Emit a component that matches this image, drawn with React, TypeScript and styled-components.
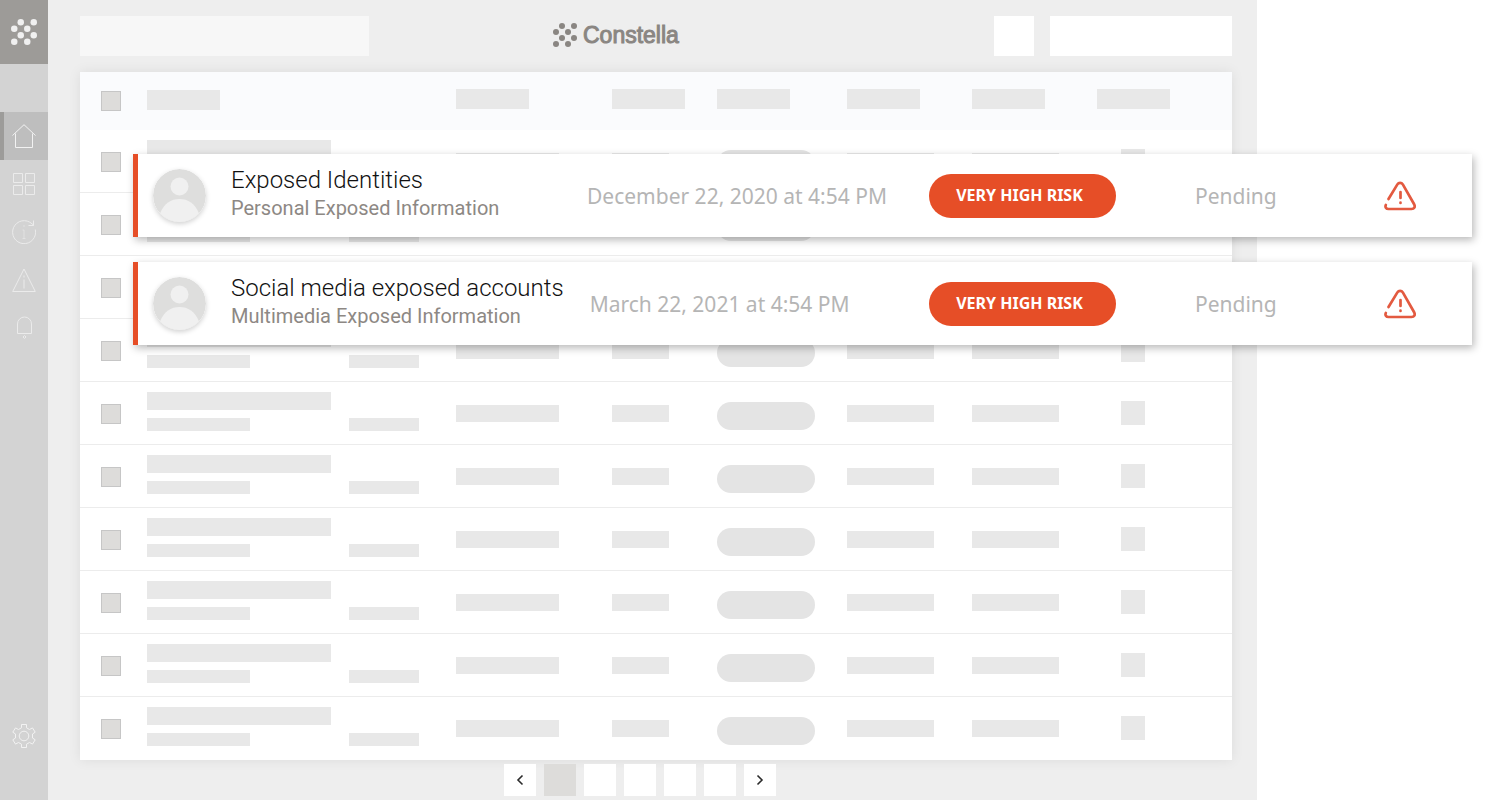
import React from "react";
import styled, { createGlobalStyle } from "styled-components";

const color = {
  shell: "#eeeeee",
  rail: "#d3d3d3",
  railTop: "#9d9b98",
  railActive: "#bebebe",
  bar: "#e8e8e8",
  pill: "#e4e4e4",
  box: "#dddcda",
  accent: "#e64e27",
  brand: "#8a8682",
};

const GlobalStyle = createGlobalStyle`
  *, *::before, *::after { box-sizing: border-box; }
  body { margin: 0; background: #fff; font-family: Roboto, "Liberation Sans", sans-serif; }
  button, input { font: inherit; border: 0; padding: 0; margin: 0; border-radius: 0; }
`;

const Page = styled.div`
  position: relative;
  padding-right: 240px;
`;

const Shell = styled.div`
  display: flex;
  min-height: 100vh;
  background: ${color.shell};
`;

const Rail = styled.aside`
  display: flex;
  flex-direction: column;
  flex: none;
  width: 48px;
  padding-bottom: 40px;
  background: ${color.rail};
`;

const RailBrand = styled.a`
  display: grid;
  place-items: center;
  height: 64px;
  background: ${color.railTop};
  color: #f0f0f0;
`;

const RailNav = styled.nav`
  display: flex;
  flex-direction: column;
  flex: 1;
  padding-top: 48px;
`;

const RailLink = styled.a<{ $active?: boolean; $last?: boolean }>`
  display: grid;
  place-items: center;
  height: 48px;
  margin-top: ${(p) => (p.$last ? "auto" : "0")};
  color: ${(p) => (p.$active || p.$last ? "#f2f2f2" : "#ebebeb")};
  background: ${(p) => (p.$active ? color.railActive : "transparent")};
  box-shadow: ${(p) => (p.$active ? "inset 4px 0 0 #9d9c9a" : "none")};
`;

const LineIcon = styled.svg`
  display: block;
  width: 24px;
  height: 24px;
  fill: none;
  stroke: currentColor;
  stroke-width: 1;
`;

const Main = styled.main`
  flex: 1;
  min-width: 0;
  padding: 16px 25px 4px 32px;
`;

const TopBar = styled.header`
  display: flex;
  align-items: center;
  height: 40px;
  margin-bottom: 16px;
`;

const Search = styled.input`
  width: 289px;
  height: 40px;
  background: #f7f7f7;
`;

const Brand = styled.a`
  display: flex;
  align-items: center;
  gap: 6px;
  margin-left: 184px;
  padding-bottom: 2px;
  color: ${color.brand};
  font: 400 23px/38px "Liberation Sans", Arial, sans-serif;
  -webkit-text-stroke: 1px ${color.brand};
  text-decoration: none;
`;

const TopActions = styled.div`
  display: flex;
  gap: 16px;
  margin-left: auto;
`;

const TopButton = styled.button<{ $width: number }>`
  width: ${(p) => p.$width}px;
  height: 40px;
  background: #fff;
`;

const Table = styled.table`
  width: 100%;
  table-layout: fixed;
  border-collapse: separate;
  border-spacing: 0;
  background: #fff;
  box-shadow: 0 0 12px rgba(0, 0, 0, 0.08);
`;

const HeadCell = styled.th<{ $lift?: number }>`
  height: 58px;
  padding: 0 0 ${(p) => p.$lift ?? 0}px;
  background: #fafbfd;
  text-align: left;
`;

const Cell = styled.td<{ $inset?: number; $last?: boolean }>`
  height: 63px;
  padding: 10px 0 0 ${(p) => p.$inset ?? 0}px;
  border-bottom: ${(p) => (p.$last ? "0" : "1px solid #ececec")};
  vertical-align: top;
`;

const Tick = styled.input`
  appearance: none;
  display: block;
  width: 20px;
  height: 20px;
  border: 1px solid #c6c6c6;
  background: ${color.box};
`;

const TickSlot = styled.div<{ $top: number }>`
  padding: ${(p) => p.$top}px 0 0 21px;
`;

const Bar = styled.div<{ $w: number; $h: number; $top?: number; $round?: boolean }>`
  width: ${(p) => p.$w}px;
  height: ${(p) => p.$h}px;
  margin-top: ${(p) => p.$top ?? 0}px;
  border-radius: ${(p) => (p.$round ? "14px" : "0")};
  background: ${(p) => (p.$round ? color.pill : color.bar)};
`;

const Pager = styled.nav`
  display: flex;
  justify-content: center;
  gap: 8px;
  padding: 4px 32px 0 0;
`;

const PageButton = styled.button<{ $current?: boolean }>`
  display: grid;
  place-items: center;
  width: 32px;
  height: 32px;
  background: ${(p) => (p.$current ? color.box : "#fff")};
  color: #2b2b2b;
`;

const Alerts = styled.section`
  position: absolute;
  top: 154px;
  left: 133px;
  right: 25px;
  display: flex;
  flex-direction: column;
  gap: 25px;
`;

const Alert = styled.article`
  display: flex;
  align-items: center;
  height: 83px;
  padding: 0 56px 0 15px;
  border-left: 5px solid ${color.accent};
  background: #fff;
  box-shadow: 2px 3px 8px rgba(0, 0, 0, 0.28);
`;

const Avatar = styled.svg`
  flex: none;
  width: 53px;
  height: 53px;
  margin-right: 25px;
  border-radius: 50%;
  box-shadow: 0 2px 5px rgba(0, 0, 0, 0.18);
`;

const Summary = styled.div`
  min-width: 356px;
  padding: 0 26px 3px 0;
  white-space: nowrap;
`;

const Title = styled.h2`
  margin: 0;
  color: #111;
  font-size: 24px;
  font-weight: 300;
  line-height: 28px;
`;

const Detail = styled.p`
  margin: 0;
  color: #8d8884;
  font-size: 20px;
  line-height: 28px;
`;

const Muted = styled.div<{ $width?: number }>`
  flex: ${(p) => (p.$width ? `0 0 ${p.$width}px` : "1")};
  color: #b5b5b5;
  font: 400 21px/28px "Noto Sans", sans-serif;
  white-space: nowrap;
`;

const Risk = styled.button`
  flex: none;
  width: 187px;
  height: 44px;
  margin-right: 79px;
  padding: 0 6px 2px 0;
  border-radius: 22px;
  background: ${color.accent};
  color: #fff;
  font: 700 16px/42px "Noto Sans", sans-serif;
`;

const WarnIcon = styled.svg`
  display: block;
  flex: none;
  width: 32px;
  height: 30px;
  fill: none;
  stroke: #e35a40;
  stroke-width: 2.7;
  stroke-linecap: round;
  stroke-linejoin: round;
`;

const DOTS = [
  [9, 3], [21, 3], [3, 9], [15, 9], [9, 15], [21, 15], [3, 21], [15, 21],
];

function Mark({ size }: { size: number }) {
  return (
    <svg width={size} height={size} viewBox="0 0 24 24" fill="currentColor" aria-hidden="true">
      {DOTS.map(([x, y]) => (
        <circle key={`${x}-${y}`} cx={x} cy={y} r="3" />
      ))}
    </svg>
  );
}

const NAV = [
  {
    label: "Home",
    shape: <path d="M0.5 11.5 12 .7l11.500 10.800M3.500 9.500v14h17v-14" />,
  },
  {
    label: "Dashboard",
    shape: <path d="M1.500 1.500h9v9h-9zM13.500 1.500h9v9h-9zM1.500 13.500h9v9h-9zM13.500 13.500h9v9h-9z" />,
  },
  {
    label: "Activity",
    shape: (
      <>
        <path d="M23.300 9.500A11.500 11.500 0 1 1 20 3.800l2 1.700M21.500 .5v5h-5" />
        <path d="M12 5v2M10.500 10H12v8.500M10.500 18.500h3" opacity="0.6" />
      </>
    ),
  },
  {
    label: "Threats",
    shape: <path d="M12 1 23.300 23.500H.7zM12 7.500v2M12 11.500v9" />,
  },
  {
    label: "Notifications",
    shape: <path d="M5.500 17.500V8a7 7 0 0 1 14 0v9.500zM12.500 19.500l1.500 1.500-1.500 1.500L11 21z" />,
  },
];

const COLUMNS = [67, 202, 107, 156, 105, 130, 125, 125];
const ROWS = Array.from({ length: 10 }, (_, i) => i);

const ALERTS = [
  {
    title: "Exposed Identities",
    detail: "Personal Exposed Information",
    date: "December 22, 2020 at 4:54 PM",
  },
  {
    title: "Social media exposed accounts",
    detail: "Multimedia Exposed Information",
    date: "March 22, 2021 at 4:54 PM",
  },
];

function Chevron({ d }: { d: string }) {
  return (
    <svg width="8" height="12" viewBox="0 0 8 12" fill="none" stroke="currentColor" strokeWidth="1.6" aria-hidden="true">
      <path d={d} />
    </svg>
  );
}

function Row({ index }: { index: number }) {
  const last = index === ROWS.length - 1;
  return (
    <tr>
      <Cell $last={last}>
        <TickSlot $top={12}>
          <Tick type="checkbox" aria-label={`Select row ${index + 1}`} />
        </TickSlot>
      </Cell>
      <Cell $last={last}>
        <Bar $w={184} $h={18} />
        <Bar $w={103} $h={13} $top={8} />
      </Cell>
      <Cell $last={last}><Bar $w={70} $h={13} $top={26} /></Cell>
      <Cell $last={last}><Bar $w={103} $h={17} $top={13} /></Cell>
      <Cell $last={last}><Bar $w={57} $h={17} $top={13} /></Cell>
      <Cell $last={last}><Bar $w={98} $h={28} $top={10} $round /></Cell>
      <Cell $last={last}><Bar $w={87} $h={17} $top={13} /></Cell>
      <Cell $last={last}><Bar $w={87} $h={17} $top={13} /></Cell>
      <Cell $last={last} $inset={24}><Bar $w={24} $h={24} $top={9} /></Cell>
    </tr>
  );
}

export default function App() {
  return (
    <Page>
      <GlobalStyle />
      <Shell>
        <Rail>
          <RailBrand href="#" aria-label="Constella">
            <Mark size={26} />
          </RailBrand>
          <RailNav>
            {NAV.map((item, i) => (
              <RailLink key={item.label} href="#" aria-label={item.label} $active={i === 0}>
                <LineIcon viewBox="0 0 24 24">{item.shape}</LineIcon>
              </RailLink>
            ))}
            <RailLink href="#" aria-label="Settings" $last>
              <LineIcon viewBox="0 0 24 24">
                <circle cx="12" cy="12" r="4.8" />
                <path d="M9.500.5h5v3.300l3 1.700 3-1.600 2.700 4.300L20.500 10v4l2.700 1.800-2.700 4.300-3-1.600-3 1.700v3.300h-5v-3.300l-3-1.700-3 1.600L.8 15.800 3.500 14v-4L.8 8.200l2.700-4.300 3 1.600 3-1.700z" />
              </LineIcon>
            </RailLink>
          </RailNav>
        </Rail>
        <Main>
          <TopBar>
            <Search type="search" aria-label="Search" />
            <Brand href="#">
              <Mark size={24} />
              Constella
            </Brand>
            <TopActions>
              <TopButton $width={40} aria-label="Options" />
              <TopButton $width={182} aria-label="Account" />
            </TopActions>
          </TopBar>
          <Table>
            <colgroup>
              {COLUMNS.map((w, i) => (
                <col key={i} width={w} />
              ))}
              <col />
            </colgroup>
            <thead>
              <tr>
                <HeadCell>
                  <TickSlot $top={0}>
                    <Tick type="checkbox" aria-label="Select all rows" />
                  </TickSlot>
                </HeadCell>
                <HeadCell $lift={2}><Bar $w={73} $h={20} /></HeadCell>
                <HeadCell />
                {[3, 4, 5, 6, 7, 8].map((c) => (
                  <HeadCell key={c} $lift={4}><Bar $w={73} $h={20} /></HeadCell>
                ))}
              </tr>
            </thead>
            <tbody>
              {ROWS.map((i) => (
                <Row key={i} index={i} />
              ))}
            </tbody>
          </Table>
          <Pager aria-label="Pages">
            <PageButton aria-label="Previous page"><Chevron d="M6.500 1.500 2 6l4.500 4.500" /></PageButton>
            {[1, 2, 3, 4, 5].map((n) => (
              <PageButton key={n} aria-label={`Page ${n}`} $current={n === 1} />
            ))}
            <PageButton aria-label="Next page"><Chevron d="M1.500 1.500 6 6l-4.500 4.500" /></PageButton>
          </Pager>
        </Main>
      </Shell>
      <Alerts>
        {ALERTS.map((a) => (
          <Alert key={a.title}>
            <Avatar viewBox="0 0 53 53" aria-hidden="true">
              <circle cx="26.5" cy="26.5" r="26.5" fill="#dededd" />
              <circle cx="26.5" cy="17.5" r="9" fill="#f0f0f0" />
              <path d="M7 44.500C11 34.500 18 30 26.500 30S42 34.500 46 44.500A26.500 26.500 0 0 1 7 44.500z" fill="#f0f0f0" />
            </Avatar>
            <Summary>
              <Title>{a.title}</Title>
              <Detail>{a.detail}</Detail>
            </Summary>
            <Muted>{a.date}</Muted>
            <Risk>VERY HIGH RISK</Risk>
            <Muted $width={189}>Pending</Muted>
            <WarnIcon viewBox="0 0 32 30" aria-hidden="true">
              <path d="M4.500 18 13.400 3.400a3.200 3.200 0 0 1 5.400 0L30 23c1.600 2.800.2 5-2.500 5h-23C2 28 .9 26 1.800 24" />
              <path d="M16.500 11v6M16.500 21.700v.2" />
            </WarnIcon>
          </Alert>
        ))}
      </Alerts>
    </Page>
  );
}
